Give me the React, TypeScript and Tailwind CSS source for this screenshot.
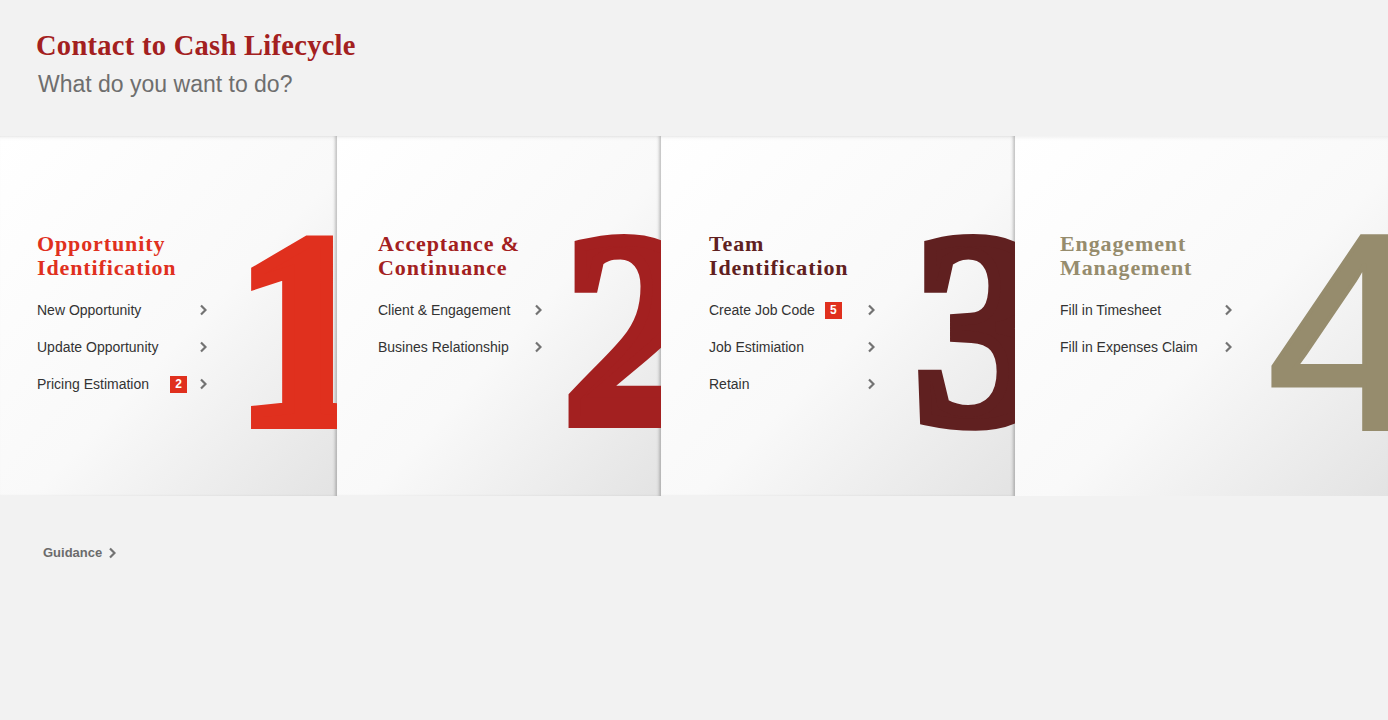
import React from 'react'

type Item = { label: string; badge?: number; badgeGap?: string }
type Stage = {
  num: string
  title: string[]
  color: string
  width: string
  pad: string
  rowW: string
  items: Item[]
  digit: string
  last?: boolean
}

const serif = { fontFamily: '"Liberation Serif", "Times New Roman", serif' }
const sans = { fontFamily: '"Liberation Sans", Arial, sans-serif' }

const STAGES: Stage[] = [
  {
    num: '1',
    title: ['Opportunity', 'Identification'],
    color: 'text-[#e0301e]',
    width: 'w-[337px]',
    pad: 'pl-[37px]',
    rowW: 'w-[170px]',
    items: [
      { label: 'New Opportunity' },
      { label: 'Update Opportunity' },
      { label: 'Pricing Estimation', badge: 2, badgeGap: 'ml-[21px]' },
    ],
    digit: 'left-[235px] top-[57px] text-[275px] font-bold [-webkit-text-stroke:12px_#e0301e]',
  },
  {
    num: '2',
    title: ['Acceptance &', 'Continuance'],
    color: 'text-[#a32020]',
    width: 'w-[324px]',
    pad: 'pl-[41px]',
    rowW: 'w-[164px]',
    items: [{ label: 'Client & Engagement' }, { label: 'Busines Relationship' }],
    digit: 'left-[226px] top-[56px] text-[275px] font-bold [-webkit-text-stroke:12px_#a32020]',
  },
  {
    num: '3',
    title: ['Team', 'Identification'],
    color: 'text-[#602020]',
    width: 'w-[354px]',
    pad: 'pl-[48px]',
    rowW: 'w-[166px]',
    items: [
      { label: 'Create Job Code', badge: 5, badgeGap: 'ml-[10px]' },
      { label: 'Job Estimiation' },
      { label: 'Retain' },
    ],
    digit: 'left-[253px] top-[56px] text-[275px] font-bold [-webkit-text-stroke:12px_#602020]',
  },
  {
    num: '4',
    title: ['Engagement', 'Management'],
    color: 'text-[#968c6d]',
    width: 'flex-1',
    pad: 'pl-[45px]',
    rowW: 'w-[172px]',
    items: [{ label: 'Fill in Timesheet' }, { label: 'Fill in Expenses Claim' }],
    digit: 'left-[252px] top-[56px] text-[280px] font-normal [-webkit-text-stroke:4px_#968c6d]',
    last: true,
  },
]

function Chevron() {
  return (
    <svg width="8" height="12" viewBox="0 0 8 12">
      <path d="M2 1.5 6.5 6 2 10.5" fill="none" stroke="#737373" strokeWidth="2.2" />
    </svg>
  )
}

function StageCard({ s }: { s: Stage }) {
  return (
    <div
      className={`relative overflow-hidden h-full ${s.width} ${s.pad} pt-[96px] bg-linear-to-br from-white via-[#f9f9f9] via-55% to-[#e3e3e3] ${
        s.last
          ? 'shadow-[inset_0_4px_4px_-3px_rgba(0,0,0,0.08)]'
          : 'shadow-[inset_-3px_0_3px_-1px_rgba(0,0,0,0.22),inset_0_4px_4px_-3px_rgba(0,0,0,0.08)]'
      }`}
    >
      <div className={`absolute leading-none select-none ${s.digit} ${s.color}`} style={s.last ? sans : serif}>
        {s.num}
      </div>
      <div className="relative">
        <h2 className={`text-[22px] leading-[24px] font-bold tracking-[0.04em] ${s.color}`} style={serif}>
          {s.title[0]}
          <br />
          {s.title[1]}
        </h2>
        <ul className="mt-[20px] flex flex-col gap-[17px]" style={sans}>
          {s.items.map((it) => (
            <li key={it.label} className={`flex items-center justify-between h-[20px] ${s.rowW}`}>
              <span className="flex items-center text-[14px] text-[#333]">
                {it.label}
                {it.badge && (
                  <span
                    className={`${it.badgeGap} w-[17px] h-[17px] bg-[#e0301e] text-white text-[12px] font-bold flex items-center justify-center`}
                  >
                    {it.badge}
                  </span>
                )}
              </span>
              <Chevron />
            </li>
          ))}
        </ul>
      </div>
    </div>
  )
}

export default function App() {
  return (
    <div className="w-[1388px] h-[720px] bg-[#f2f2f2] flex flex-col">
      <div className="h-[136px] pl-[36px] pt-[29px]">
        <h1 className="text-[28.5px] leading-[34px] font-bold text-[#a32020] tracking-[0.01em]" style={serif}>
          Contact to Cash Lifecycle
        </h1>
        <p className="ml-[2px] mt-[7px] text-[23px] leading-[28px] text-[#6e6e6e]" style={sans}>
          What do you want to do?
        </p>
      </div>
      <div className="h-[360px] flex">
        {STAGES.map((s) => (
          <StageCard key={s.num} s={s} />
        ))}
      </div>
      <div className="pl-[43px] pt-[43px]">
        <a className="inline-flex items-center gap-[6px] text-[13px] font-bold text-[#6b6b6b]" style={sans}>
          Guidance
          <Chevron />
        </a>
      </div>
    </div>
  )
}
